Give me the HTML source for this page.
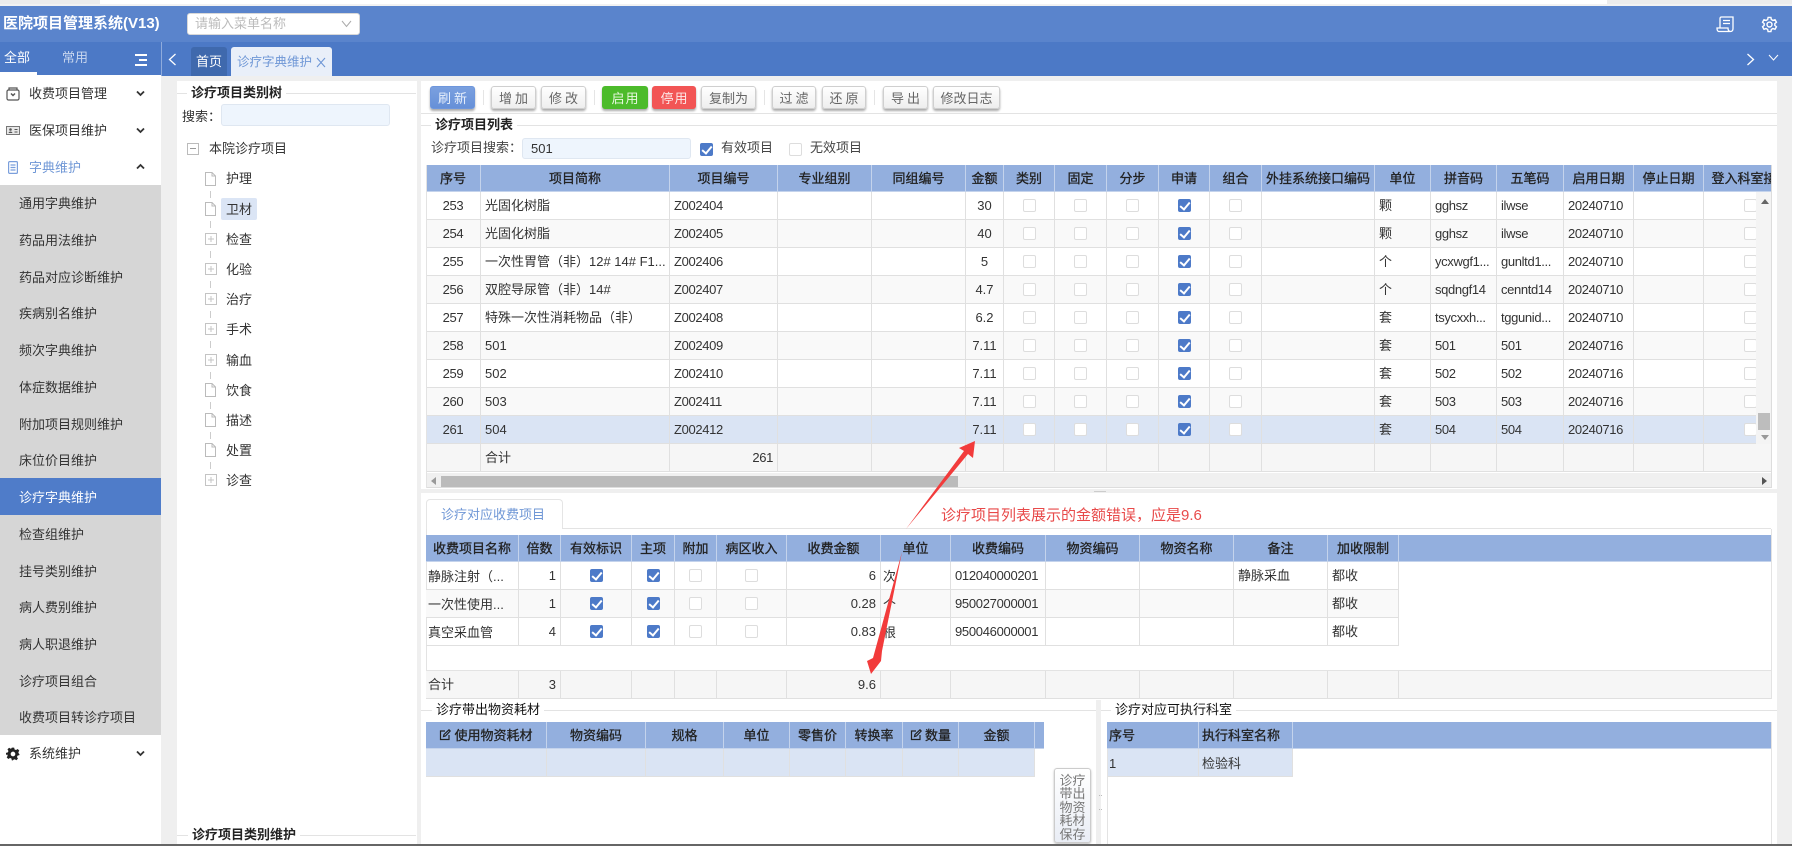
<!DOCTYPE html>
<html lang="zh-CN"><head><meta charset="utf-8"><title>医院项目管理系统</title>
<style>
*{box-sizing:border-box}
html,body{margin:0;padding:0;width:1793px;height:846px;overflow:hidden;background:#efefef}
body{position:relative;font:13px/20px "Liberation Sans","Noto Sans CJK SC",sans-serif;color:#333}
.a{position:absolute;white-space:nowrap}
.t{position:absolute;white-space:nowrap;height:20px;line-height:20px}
.m{left:19px;color:#333}
.ti{font-weight:bold;color:#222;background:#fff;padding:0 4px}
.ln{position:absolute;height:1px;background:#e3e3e3}
.b{position:absolute;top:86px;height:23px;border:1px solid #cfcfcf;border-radius:3px;background:linear-gradient(#fff,#eee);box-shadow:0 2px 2px #aaa;color:#666;text-align:center;line-height:24px;font-size:13px;white-space:nowrap}
.sp{position:absolute;top:90px;width:1px;height:15px;background:#e5e5e5}
table{border-collapse:separate;border-spacing:0;table-layout:fixed;font-size:13px}
td,th{box-sizing:border-box;border-right:1px solid #e0e0e0;border-bottom:1px solid #e0e0e0;padding:1px 4px 0;white-space:nowrap;overflow:hidden;font-weight:normal;color:#333}
th{background:#93afde;color:#222;height:27px;-webkit-text-stroke:.3px #222;border-right:1px solid #c4d3ec;border-bottom:1px solid #c4d3ec;text-align:center;padding:1px 2px 0}
td{height:28px}
tr.g td{background:#f9f9f9}
tr.s td{background:#dae4f4}
tr.h td{background:#f6f6f6}
.ct{text-align:center}.r{text-align:right}
.c,.k{display:inline-block;position:relative;width:13px;height:13px;border:1px solid #ddd;border-radius:2px;background:#fff;vertical-align:middle;margin-top:-2px}
.k{background:#4d7ac8;border-color:#4d7ac8}
.k::after{content:"";position:absolute;left:3px;top:0;width:4px;height:8px;border:solid #fff;border-width:0 2px 2px 0;transform:rotate(40deg)}
.main td:nth-child(3),.main td:nth-child(14),.main td:nth-child(15),.main td:nth-child(16),.main td:nth-child(1){letter-spacing:-.35px}
.low td:nth-child(9){letter-spacing:-.3px}
.fi{position:absolute;left:205px;width:11px;height:14px}
.pl{position:absolute;left:205px;width:12px;height:12px}
.cn{position:absolute;left:210px;width:1px;height:7px;background:#ccc}
.tr{position:absolute;left:226px;height:20px;line-height:20px;color:#333}
</style></head>
<body>
<!-- top strip -->
<div class="a" style="left:0;top:0;width:1793px;height:6px;background:#fff"></div>
<div class="a" style="left:0;top:0;width:100px;height:6px;background:#ececec"></div>
<div class="a" style="left:1607px;top:0;width:186px;height:6px;background:#ececec"></div>
<div class="a" style="left:0;top:4px;width:1793px;height:2px;background:#f2f2f2"></div>
<!-- header -->
<div class="a" style="left:0;top:6px;width:1792px;height:36px;background:#5a84cc"></div>
<div class="a" style="left:0;top:42px;width:1792px;height:34px;background:#4c79c6"></div>
<div class="t" style="left:3px;top:14px;color:#fff;font-size:15px;font-weight:bold">医院项目管理系统(V13)</div>
<div class="a" style="left:187px;top:13px;width:173px;height:22px;background:#fff;border:1px solid #d8d8d8;border-radius:3px"></div>
<div class="t" style="left:195px;top:14px;color:#bbb">请输入菜单名称</div>
<svg class="a" style="left:341px;top:20px" width="11" height="8" viewBox="0 0 11 8"><path d="M1 1l4.5 5.5L10 1" fill="none" stroke="#aaa" stroke-width="1"/></svg>
<svg class="a" style="left:1716px;top:16px" width="18" height="17" viewBox="0 0 18 17" fill="none" stroke="#fff" stroke-width="1.3"><path d="M4 12V2.5C4 1.5 4.6 1 5.5 1H17v11.5c0 2-1 3-2.5 3H3C1.500 15.500 1 14 1 12h11c0 1.500.5 3.500 2.500 3.500M7 4.500h7M7 7.500h7"/></svg>
<svg class="a" style="left:1761px;top:16px" width="17" height="17" viewBox="0 0 24 24" fill="none" stroke="#fff" stroke-width="2"><circle cx="12" cy="12" r="3.500"/><path d="M10 2h4l.6 3 2.300 1.300 2.900-1 2 3.500-2.300 2v2.400l2.300 2-2 3.500-2.900-1-2.300 1.300-.6 3h-4l-.6-3-2.300-1.300-2.900 1-2-3.500 2.300-2v-2.400l-2.300-2 2-3.500 2.900 1L9.400 5z"/></svg>
<!-- sidebar tabs -->
<div class="t" style="left:4px;top:48px;color:#fff">全部</div>
<div class="t" style="left:62px;top:48px;color:#c8d6ee">常用</div>
<div class="a" style="left:135px;top:54px;width:12px;height:2px;background:#fff"></div>
<div class="a" style="left:139px;top:59px;width:8px;height:2px;background:#fff"></div>
<div class="a" style="left:135px;top:64px;width:12px;height:2px;background:#fff"></div>
<div class="a" style="left:0;top:72px;width:37px;height:3px;background:#fff"></div>
<div class="a" style="left:161px;top:42px;width:1px;height:34px;background:#8fabdc"></div>
<!-- tab bar -->
<svg class="a" style="left:168px;top:53px" width="9" height="13" viewBox="0 0 9 13"><path d="M7.500 1L1.500 6.500l6 5.500" fill="none" stroke="#fff" stroke-width="1.300"/></svg>
<div class="a" style="left:191px;top:47px;width:36px;height:29px;background:#3f69ad;border-radius:3px 3px 0 0;color:#fff;text-align:center;line-height:30px">首页</div>
<div class="a" style="left:231px;top:47px;width:101px;height:29px;background:#e9eff9;border-radius:3px 3px 0 0"></div>
<div class="t" style="left:237px;top:52px;color:#6f97d6;font-size:12.500px">诊疗字典维护</div>
<svg class="a" style="left:316px;top:57px" width="10" height="11" viewBox="0 0 10 11"><path d="M1 1l8 9M9 1L1 10" stroke="#6f97d6" stroke-width="1.100"/></svg>
<svg class="a" style="left:1746px;top:53px" width="9" height="13" viewBox="0 0 9 13"><path d="M1.500 1l6 5.500-6 5.500" fill="none" stroke="#fff" stroke-width="1.300"/></svg>
<svg class="a" style="left:1768px;top:54px" width="11" height="7" viewBox="0 0 11 7"><path d="M1 1l4.500 5L10 1" fill="none" stroke="#fff" stroke-width="1"/></svg>

<!-- sidebar -->
<div class="a" style="left:0;top:75px;width:161px;height:769px;background:#fff"></div>
<div class="a" style="left:0;top:185px;width:161px;height:550px;background:#d6d6d6"></div>
<svg class="a" style="left:6px;top:87px" width="14" height="14" viewBox="0 0 14 14" fill="none" stroke="#555" stroke-width="1.200"><rect x="1" y="3" width="12" height="10" rx="1.500"/><path d="M3 3V1h8v2"/><path d="M5 6.500l2 2 2-2" stroke-width="1.500"/></svg>
<svg class="a" style="left:6px;top:126px" width="14" height="9" viewBox="0 0 14 9"><rect x=".5" y=".5" width="13" height="8" fill="#e8e8e8" stroke="#777"/><circle cx="4.500" cy="3.500" r="1.300" fill="#555"/><path d="M2.500 7c.5-2 3.500-2 4 0zM8.500 3h3v1h-3zM8.500 5.500h3v1h-3z" fill="#555"/></svg>
<svg class="a" style="left:8px;top:161px" width="10" height="13" viewBox="0 0 10 13" fill="none" stroke="#7b9fdc" stroke-width="1.200"><rect x=".6" y=".6" width="8.800" height="11.800" rx="1"/><path d="M2.500 4h5M2.500 6.500h5M2.500 9h5"/></svg>
<div class="t" style="left:29px;top:84px">收费项目管理</div>
<div class="t" style="left:29px;top:121px">医保项目维护</div>
<div class="t" style="left:29px;top:158px;color:#6f97d6">字典维护</div>
<svg class="a" style="left:136px;top:90px" width="9" height="7" viewBox="0 0 9 7"><path d="M1 1.500l3.500 3.500L8 1.500" fill="none" stroke="#333" stroke-width="1.800"/></svg>
<svg class="a" style="left:136px;top:127px" width="9" height="7" viewBox="0 0 9 7"><path d="M1 1.500l3.500 3.500L8 1.500" fill="none" stroke="#333" stroke-width="1.800"/></svg>
<svg class="a" style="left:136px;top:163px" width="9" height="7" viewBox="0 0 9 7"><path d="M1 5.500L4.500 2 8 5.500" fill="none" stroke="#333" stroke-width="1.800"/></svg>
<div class="t m" style="top:194px">通用字典维护</div>
<div class="t m" style="top:231px">药品用法维护</div>
<div class="t m" style="top:268px">药品对应诊断维护</div>
<div class="t m" style="top:304px">疾病别名维护</div>
<div class="t m" style="top:341px">频次字典维护</div>
<div class="t m" style="top:378px">体症数据维护</div>
<div class="t m" style="top:415px">附加项目规则维护</div>
<div class="t m" style="top:451px">床位价目维护</div>
<div class="a" style="left:0;top:478px;width:161px;height:37px;background:#4f7cc9"></div>
<div class="t m" style="top:488px;color:#fff">诊疗字典维护</div>
<div class="t m" style="top:525px">检查组维护</div>
<div class="t m" style="top:562px">挂号类别维护</div>
<div class="t m" style="top:598px">病人费别维护</div>
<div class="t m" style="top:635px">病人职退维护</div>
<div class="t m" style="top:672px">诊疗项目组合</div>
<div class="t m" style="top:708px">收费项目转诊疗项目</div>
<svg class="a" style="left:6px;top:747px" width="14" height="14" viewBox="0 0 24 24"><path fill="#222" d="M10 1h4l.7 3.200 2.500 1 2.800-1.700 2.800 2.800-1.700 2.800 1 2.500L23 12v0l0 2-3.200.7-1 2.500 1.700 2.800-2.800 2.800-2.800-1.700-2.500 1L12 23h-2l-.7-3.200-2.500-1-2.800 1.700-2.800-2.800 1.700-2.800-1-2.500L0 14v-4l3.200-.7 1-2.500L2.500 4l2.800-2.800 2.800 1.700 1.200-.5z"/><circle cx="12" cy="12" r="4" fill="#fff"/></svg>
<div class="t" style="left:29px;top:744px">系统维护</div>
<svg class="a" style="left:136px;top:750px" width="9" height="7" viewBox="0 0 9 7"><path d="M1 1.500l3.500 3.500L8 1.500" fill="none" stroke="#333" stroke-width="1.800"/></svg>

<!-- tree panel -->
<div class="a" style="left:177px;top:81px;width:239.500px;height:763px;background:#fff"></div>
<div class="ln" style="left:177px;top:93px;width:239px"></div>
<div class="t ti" style="left:187px;top:83px">诊疗项目类别树</div>
<div class="t" style="left:182px;top:107px">搜索：</div>
<div class="a" style="left:221px;top:104px;width:169px;height:22px;background:#eef5fd;border:1px solid #dfe7f1;border-radius:3px"></div>
<div class="a" style="left:187px;top:143px;width:12px;height:12px;border:1px solid #bbb"></div>
<div class="a" style="left:190px;top:148px;width:6px;height:1px;background:#999"></div>
<div class="t" style="left:209px;top:139px">本院诊疗项目</div>
<div class="a" style="left:221px;top:198px;width:36px;height:22px;background:#dbe5f5;border-radius:2px"></div>

<svg class="fi" style="top:172px" viewBox="0 0 11 14"><path d="M.5.500h6.500l3.500 3.500v9.500h-10zM7 .5v3.500h3.500" fill="#fff" stroke="#bbb"/></svg>
<svg class="fi" style="top:202px" viewBox="0 0 11 14"><path d="M.5.500h6.500l3.500 3.500v9.500h-10zM7 .5v3.500h3.500" fill="#fff" stroke="#bbb"/></svg>
<svg class="pl" style="top:233px" viewBox="0 0 12 12"><path d="M.5.500h11v11H.500zM3 6h6M6 3v6" fill="#fff" stroke="#c4c4c4"/></svg>
<svg class="pl" style="top:263px" viewBox="0 0 12 12"><path d="M.5.500h11v11H.500zM3 6h6M6 3v6" fill="#fff" stroke="#c4c4c4"/></svg>
<svg class="pl" style="top:293px" viewBox="0 0 12 12"><path d="M.5.500h11v11H.500zM3 6h6M6 3v6" fill="#fff" stroke="#c4c4c4"/></svg>
<svg class="pl" style="top:323px" viewBox="0 0 12 12"><path d="M.5.500h11v11H.500zM3 6h6M6 3v6" fill="#fff" stroke="#c4c4c4"/></svg>
<svg class="pl" style="top:354px" viewBox="0 0 12 12"><path d="M.5.500h11v11H.500zM3 6h6M6 3v6" fill="#fff" stroke="#c4c4c4"/></svg>
<svg class="fi" style="top:383px" viewBox="0 0 11 14"><path d="M.5.500h6.500l3.500 3.500v9.500h-10zM7 .5v3.500h3.500" fill="#fff" stroke="#bbb"/></svg>
<svg class="fi" style="top:413px" viewBox="0 0 11 14"><path d="M.5.500h6.500l3.500 3.500v9.500h-10zM7 .5v3.500h3.500" fill="#fff" stroke="#bbb"/></svg>
<svg class="fi" style="top:443px" viewBox="0 0 11 14"><path d="M.5.500h6.500l3.500 3.500v9.500h-10zM7 .5v3.500h3.500" fill="#fff" stroke="#bbb"/></svg>
<svg class="pl" style="top:474px" viewBox="0 0 12 12"><path d="M.5.500h11v11H.500zM3 6h6M6 3v6" fill="#fff" stroke="#c4c4c4"/></svg>
<div class="cn" style="top:191px"></div><div class="cn" style="top:221px"></div><div class="cn" style="top:251px"></div><div class="cn" style="top:281px"></div><div class="cn" style="top:311px"></div><div class="cn" style="top:341px"></div><div class="cn" style="top:372px"></div><div class="cn" style="top:402px"></div><div class="cn" style="top:432px"></div><div class="cn" style="top:462px"></div>
<div class="tr" style="top:169px">护理</div>
<div class="tr" style="top:200px">卫材</div>
<div class="tr" style="top:230px">检查</div>
<div class="tr" style="top:260px">化验</div>
<div class="tr" style="top:290px">治疗</div>
<div class="tr" style="top:320px">手术</div>
<div class="tr" style="top:351px">输血</div>
<div class="tr" style="top:381px">饮食</div>
<div class="tr" style="top:411px">描述</div>
<div class="tr" style="top:441px">处置</div>
<div class="tr" style="top:471px">诊查</div>
<div class="ln" style="left:177px;top:835px;width:239px"></div>
<div class="t ti" style="left:188px;top:826px;height:18px;line-height:18px">诊疗项目类别维护</div>

<!-- main panel -->
<div class="a" style="left:421px;top:81px;width:1356px;height:408px;background:#fff"></div>
<div class="a" style="left:421px;top:493px;width:1356px;height:207px;background:#fff"></div>
<div class="a" style="left:421px;top:700px;width:675px;height:144px;background:#fff"></div>
<div class="a" style="left:1101px;top:700px;width:676px;height:144px;background:#fff"></div>
<!-- toolbar -->
<div class="b" style="left:430px;width:45px;background:linear-gradient(#7ba0df,#6690d8);border-color:#6e96dc;color:#e8f0fc;letter-spacing:3px;padding-left:3px">刷新</div>
<div class="sp" style="left:483px"></div>
<div class="b" style="left:491px;width:45px;letter-spacing:3px;padding-left:3px">增加</div>
<div class="b" style="left:541px;width:45px;letter-spacing:3px;padding-left:3px">修改</div>
<div class="sp" style="left:594px"></div>
<div class="b" style="left:602px;width:46px;background:#4cbb2b;border-color:#4cbb2b;color:#e8f8e0;letter-spacing:1px;padding-left:1px">启用</div>
<div class="b" style="left:652px;width:44px;background:#f25555;border-color:#f25555;color:#fde8e8;letter-spacing:1px;padding-left:1px">停用</div>
<div class="b" style="left:701px;width:55px">复制为</div>
<div class="sp" style="left:764px"></div>
<div class="b" style="left:772px;width:44px;letter-spacing:3px;padding-left:3px">过滤</div>
<div class="b" style="left:822px;width:44px;letter-spacing:3px;padding-left:3px">还原</div>
<div class="sp" style="left:874px"></div>
<div class="b" style="left:883px;width:45px;letter-spacing:3px;padding-left:3px">导出</div>
<div class="b" style="left:933px;width:67px">修改日志</div>
<div class="ln" style="left:421px;top:113px;width:1356px"></div>
<div class="ln" style="left:421px;top:125px;width:1356px"></div>
<div class="t ti" style="left:431px;top:116px;height:18px;line-height:18px">诊疗项目列表</div>
<div class="t" style="left:431px;top:138px;color:#444">诊疗项目搜索：</div>
<div class="a" style="left:522px;top:138px;width:169px;height:21px;background:#eef5fd;border:1px solid #dfe7f1;border-radius:3px;padding-left:8px;line-height:20px">501</div>
<span class="k" style="position:absolute;left:700px;top:143px;margin:0"></span>
<div class="t" style="left:721px;top:138px;color:#444">有效项目</div>
<span class="c" style="position:absolute;left:789px;top:143px;margin:0"></span>
<div class="t" style="left:810px;top:138px;color:#444">无效项目</div>

<!-- main grid -->
<div class="a main" style="left:426px;top:165px;width:1345px;height:308px;overflow:hidden">
<table style="width:1372px">
<colgroup><col style="width:55px"><col style="width:189px"><col style="width:108px"><col style="width:94px"><col style="width:94px"><col style="width:38px"><col style="width:51px"><col style="width:52px"><col style="width:52px"><col style="width:51px"><col style="width:52px"><col style="width:113px"><col style="width:56px"><col style="width:66px"><col style="width:67px"><col style="width:70px"><col style="width:70px"><col style="width:94px"></colgroup>
<tr><th>序号</th><th>项目简称</th><th>项目编号</th><th>专业组别</th><th>同组编号</th><th>金额</th><th>类别</th><th>固定</th><th>分步</th><th>申请</th><th>组合</th><th>外挂系统接口编码</th><th>单位</th><th>拼音码</th><th>五笔码</th><th>启用日期</th><th>停止日期</th><th>登入科室接收</th></tr>
<tr><td class="ct">253</td><td>光固化树脂</td><td>Z002404</td><td></td><td></td><td class="ct">30</td><td class="ct"><i class="c"></i></td><td class="ct"><i class="c"></i></td><td class="ct"><i class="c"></i></td><td class="ct"><i class="k"></i></td><td class="ct"><i class="c"></i></td><td></td><td>颗</td><td>gghsz</td><td>ilwse</td><td>20240710</td><td></td><td class="ct"><i class="c"></i></td></tr>
<tr class="g"><td class="ct">254</td><td>光固化树脂</td><td>Z002405</td><td></td><td></td><td class="ct">40</td><td class="ct"><i class="c"></i></td><td class="ct"><i class="c"></i></td><td class="ct"><i class="c"></i></td><td class="ct"><i class="k"></i></td><td class="ct"><i class="c"></i></td><td></td><td>颗</td><td>gghsz</td><td>ilwse</td><td>20240710</td><td></td><td class="ct"><i class="c"></i></td></tr>
<tr><td class="ct">255</td><td>一次性胃管（非）12# 14# F1...</td><td>Z002406</td><td></td><td></td><td class="ct">5</td><td class="ct"><i class="c"></i></td><td class="ct"><i class="c"></i></td><td class="ct"><i class="c"></i></td><td class="ct"><i class="k"></i></td><td class="ct"><i class="c"></i></td><td></td><td>个</td><td>ycxwgf1...</td><td>gunltd1...</td><td>20240710</td><td></td><td class="ct"><i class="c"></i></td></tr>
<tr class="g"><td class="ct">256</td><td>双腔导尿管（非）14#</td><td>Z002407</td><td></td><td></td><td class="ct">4.7</td><td class="ct"><i class="c"></i></td><td class="ct"><i class="c"></i></td><td class="ct"><i class="c"></i></td><td class="ct"><i class="k"></i></td><td class="ct"><i class="c"></i></td><td></td><td>个</td><td>sqdngf14</td><td>cenntd14</td><td>20240710</td><td></td><td class="ct"><i class="c"></i></td></tr>
<tr><td class="ct">257</td><td>特殊一次性消耗物品（非）</td><td>Z002408</td><td></td><td></td><td class="ct">6.2</td><td class="ct"><i class="c"></i></td><td class="ct"><i class="c"></i></td><td class="ct"><i class="c"></i></td><td class="ct"><i class="k"></i></td><td class="ct"><i class="c"></i></td><td></td><td>套</td><td>tsycxxh...</td><td>tggunid...</td><td>20240710</td><td></td><td class="ct"><i class="c"></i></td></tr>
<tr class="g"><td class="ct">258</td><td>501</td><td>Z002409</td><td></td><td></td><td class="ct">7.11</td><td class="ct"><i class="c"></i></td><td class="ct"><i class="c"></i></td><td class="ct"><i class="c"></i></td><td class="ct"><i class="k"></i></td><td class="ct"><i class="c"></i></td><td></td><td>套</td><td>501</td><td>501</td><td>20240716</td><td></td><td class="ct"><i class="c"></i></td></tr>
<tr><td class="ct">259</td><td>502</td><td>Z002410</td><td></td><td></td><td class="ct">7.11</td><td class="ct"><i class="c"></i></td><td class="ct"><i class="c"></i></td><td class="ct"><i class="c"></i></td><td class="ct"><i class="k"></i></td><td class="ct"><i class="c"></i></td><td></td><td>套</td><td>502</td><td>502</td><td>20240716</td><td></td><td class="ct"><i class="c"></i></td></tr>
<tr class="g"><td class="ct">260</td><td>503</td><td>Z002411</td><td></td><td></td><td class="ct">7.11</td><td class="ct"><i class="c"></i></td><td class="ct"><i class="c"></i></td><td class="ct"><i class="c"></i></td><td class="ct"><i class="k"></i></td><td class="ct"><i class="c"></i></td><td></td><td>套</td><td>503</td><td>503</td><td>20240716</td><td></td><td class="ct"><i class="c"></i></td></tr>
<tr class="s"><td class="ct">261</td><td>504</td><td>Z002412</td><td></td><td></td><td class="ct">7.11</td><td class="ct"><i class="c"></i></td><td class="ct"><i class="c"></i></td><td class="ct"><i class="c"></i></td><td class="ct"><i class="k"></i></td><td class="ct"><i class="c"></i></td><td></td><td>套</td><td>504</td><td>504</td><td>20240716</td><td></td><td class="ct"><i class="c"></i></td></tr>
<tr class="h"><td></td><td>合计</td><td class="r">261</td><td></td><td></td><td></td><td></td><td></td><td></td><td></td><td></td><td></td><td></td><td></td><td></td><td></td><td></td><td></td></tr>
</table>
</div>
<!-- grid scrollbars -->
<div class="a" style="left:1756px;top:192px;width:15px;height:252px;background:#f4f4f4"></div>
<div class="a" style="left:1758px;top:413px;width:12px;height:17px;background:#bdbdbd"></div>
<div class="a" style="left:1761px;top:199px;border:4px solid transparent;border-top:0;border-bottom:5px solid #666"></div>
<div class="a" style="left:1761px;top:435px;border:4px solid transparent;border-bottom:0;border-top:5px solid #999"></div>
<div class="a" style="left:426px;top:473px;width:1345px;height:15px;background:#f0f0f0;border-bottom:1px solid #ddd"></div>
<div class="a" style="left:441px;top:476px;width:517px;height:11px;background:#bbb"></div>
<div class="a" style="left:431px;top:477px;border:4px solid transparent;border-left:0;border-right:5px solid #999"></div>
<div class="a" style="left:1762px;top:477px;border:4px solid transparent;border-right:0;border-left:5px solid #555"></div>
<div class="a" style="left:1771px;top:165px;width:1px;height:323px;background:#ddd"></div>
<div class="a" style="left:426px;top:165px;width:1px;height:323px;background:#e3e3e3"></div>
<div class="ln" style="left:1094px;top:491px;width:12px;background:#ccc"></div>

<!-- lower tab -->
<div class="a" style="left:426px;top:499px;width:137px;height:30px;background:#fff;border:1px solid #e5e5e5;border-bottom:0;border-radius:4px 4px 0 0;color:#6f97d6;line-height:30px;padding-left:14px">诊疗对应收费项目</div>
<div class="ln" style="left:562px;top:528px;width:1209px"></div>
<div class="a" style="left:426px;top:529px;width:1px;height:170px;background:#e3e3e3"></div>
<div class="a" style="left:1771px;top:529px;width:1px;height:170px;background:#e3e3e3"></div>
<!-- lower grid -->
<div class="a low" style="left:426px;top:535px;width:1345px;height:112px;overflow:hidden">
<table style="width:1345px">
<colgroup><col style="width:93px"><col style="width:42px"><col style="width:71px"><col style="width:43px"><col style="width:42px"><col style="width:70px"><col style="width:94px"><col style="width:70px"><col style="width:95px"><col style="width:94px"><col style="width:94px"><col style="width:94px"><col style="width:71px"><col></colgroup>
<tr><th>收费项目名称</th><th>倍数</th><th>有效标识</th><th>主项</th><th>附加</th><th>病区收入</th><th>收费金额</th><th>单位</th><th>收费编码</th><th>物资编码</th><th>物资名称</th><th>备注</th><th>加收限制</th><th style="border-right:0"></th></tr>
<tr><td style="padding:2px 2px 0">静脉注射（...</td><td class="r">1</td><td class="ct"><i class="k"></i></td><td class="ct"><i class="k"></i></td><td class="ct"><i class="c"></i></td><td class="ct"><i class="c"></i></td><td class="r">6</td><td style="padding:2px 2px 0">次</td><td>012040000201</td><td></td><td></td><td>静脉采血</td><td>都收</td><td style="border:0;background:#fff"></td></tr>
<tr class="g"><td style="padding:2px 2px 0">一次性使用...</td><td class="r">1</td><td class="ct"><i class="k"></i></td><td class="ct"><i class="k"></i></td><td class="ct"><i class="c"></i></td><td class="ct"><i class="c"></i></td><td class="r">0.28</td><td style="padding:2px 2px 0">个</td><td>950027000001</td><td></td><td></td><td></td><td>都收</td><td style="border:0;background:#fff"></td></tr>
<tr><td style="padding:2px 2px 0">真空采血管</td><td class="r">4</td><td class="ct"><i class="k"></i></td><td class="ct"><i class="k"></i></td><td class="ct"><i class="c"></i></td><td class="ct"><i class="c"></i></td><td class="r">0.83</td><td style="padding:2px 2px 0">根</td><td>950046000001</td><td></td><td></td><td></td><td>都收</td><td style="border:0;background:#fff"></td></tr>
</table>
</div>
<div class="a" style="left:426px;top:670px;width:1345px;height:29px;overflow:hidden;border-top:1px solid #e3e3e3">
<table style="width:1345px">
<colgroup><col style="width:93px"><col style="width:42px"><col style="width:71px"><col style="width:43px"><col style="width:42px"><col style="width:70px"><col style="width:94px"><col style="width:70px"><col style="width:95px"><col style="width:94px"><col style="width:94px"><col style="width:94px"><col style="width:71px"><col></colgroup>
<tr class="h"><td style="padding:1px 2px 0">合计</td><td class="r">3</td><td></td><td></td><td></td><td></td><td class="r">9.6</td><td></td><td></td><td></td><td></td><td></td><td></td><td style="border-right:0"></td></tr>
</table>
</div>

<!-- bottom left section -->
<div class="ln" style="left:421px;top:710px;width:675px"></div>
<div class="t ti" style="left:432px;top:700px;font-weight:normal;color:#111">诊疗带出物资耗材</div>
<div class="a" style="left:426px;top:722px;width:618px;height:56px;overflow:hidden">
<table style="width:618px">
<colgroup><col style="width:121px"><col style="width:99px"><col style="width:78px"><col style="width:66px"><col style="width:56px"><col style="width:57px"><col style="width:56px"><col style="width:76px"><col style="width:9px"></colgroup>
<tr><th><svg width="12" height="12" viewBox="0 0 12 12" style="vertical-align:-1px;margin-right:3px" fill="none" stroke="#222" stroke-width="1.200"><path d="M6 2H1.500v8.500H10V6M4.500 7.500l.5-2L10 .8l1.200 1.200L6.500 7z"/></svg>使用物资耗材</th><th>物资编码</th><th>规格</th><th>单位</th><th>零售价</th><th>转换率</th><th><svg width="12" height="12" viewBox="0 0 12 12" style="vertical-align:-1px;margin-right:3px" fill="none" stroke="#222" stroke-width="1.200"><path d="M6 2H1.500v8.500H10V6M4.500 7.500l.5-2L10 .8l1.200 1.200L6.500 7z"/></svg>数量</th><th>金额</th><th style="border-right:0"></th></tr>
<tr class="s"><td></td><td></td><td></td><td></td><td></td><td></td><td></td><td></td><td style="background:#fff;border:0"></td></tr>
</table>
</div>
<div class="a" style="left:1054px;top:768px;width:37px;height:75px;border:1px solid #ccc;border-radius:3px;background:linear-gradient(#fff,#e9edf5);box-shadow:0 1px 2px #bbb;color:#777;font-size:13px;line-height:13.400px;text-align:center;white-space:normal;padding:5px 3px 0">诊疗带出物资耗材保存</div>
<!-- bottom right section -->
<div class="ln" style="left:1101px;top:710px;width:676px"></div>
<div class="t ti" style="left:1111px;top:700px;font-weight:normal;color:#111">诊疗对应可执行科室</div>
<div class="a" style="left:1107px;top:722px;width:664px;height:56px;overflow:hidden">
<table style="width:664px">
<colgroup><col style="width:92px"><col style="width:94px"><col></colgroup>
<tr><th style="text-align:left;padding-top:2px">序号</th><th style="text-align:left;padding:2px 0 0 3px">执行科室名称</th><th style="border-right:0"></th></tr>
<tr class="s"><td style="padding:3px 0 0 2px">1</td><td style="padding:3px 0 0 3px">检验科</td><td style="background:#fff;border:0"></td></tr>
</table>
</div>
<div class="a" style="left:1107px;top:749px;width:1px;height:95px;background:#e3e3e3"></div>
<div class="a" style="left:1771px;top:722px;width:1px;height:122px;background:#e3e3e3"></div>
<div class="a" style="left:1099px;top:795px;width:3px;height:15px;border-top:1px dotted #bbb;border-bottom:1px dotted #bbb"></div>

<!-- annotation -->
<svg class="a" style="left:0;top:0;pointer-events:none" width="1793" height="846" viewBox="0 0 1793 846">
<polygon points="906,529 964,451 959,448 975,441 973,458 968,454" fill="#f23b3b"/>
<polygon points="902,552 882,651 881,661 871,674 867,661 873,658" fill="#f23b3b"/>
</svg>
<div class="t" style="left:941px;top:506px;color:#e84a4a;font-size:15px;height:20px">诊疗项目列表展示的金额错误，应是9.6</div>
<!-- bottom line / right edge -->
<div class="a" style="left:0;top:844px;width:1793px;height:2px;background:#666"></div>
<div class="a" style="left:1792px;top:0;width:1px;height:846px;background:#fff"></div>
</body></html>
